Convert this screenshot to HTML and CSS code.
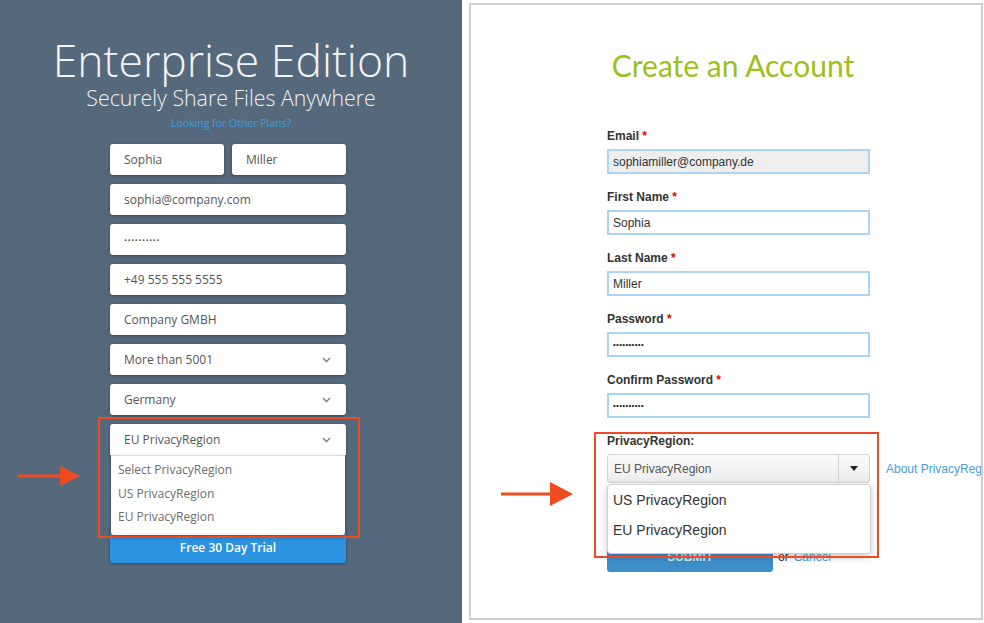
FILE: index.html
```html
<!DOCTYPE html>
<html lang="en">
<head>
    <meta charset="UTF-8">
    <meta name="viewport" content="width=device-width, initial-scale=1.0">
    <title>Privacy Region</title>
    <link rel="stylesheet" href="styles.css">
</head>
<body>
    <div class="plans">
        <h1 class="plans-title">Enterprise Edition</h1>
        <p class="plans-tagline">Securely Share Files Anywhere</p>
        <a class="plans-link" href="#">Looking for Other Plans?</a>

        <form class="trial-form">
            <div class="name-row">
                <div class="field">Sophia</div>
                <div class="field">Miller</div>
            </div>
            <div class="field">sophia@company.com</div>
            <div class="field field-dots">••••••••••</div>
            <div class="field">+49 555 555 5555</div>
            <div class="field">Company GMBH</div>
            <div class="field field-select">
                <span>More than 5001</span>
                <svg class="chevron" width="9" height="6" viewBox="0 0 9 6"><polyline points="1,1 4.5,4.5 8,1" fill="none" stroke="#7b7b7b" stroke-width="1.3"/></svg>
            </div>
            <div class="field field-select">
                <span>Germany</span>
                <svg class="chevron" width="9" height="6" viewBox="0 0 9 6"><polyline points="1,1 4.5,4.5 8,1" fill="none" stroke="#7b7b7b" stroke-width="1.3"/></svg>
            </div>
            <div class="field field-select field-open">
                <span>EU PrivacyRegion</span>
                <svg class="chevron" width="9" height="6" viewBox="0 0 9 6"><polyline points="1,1 4.5,4.5 8,1" fill="none" stroke="#7b7b7b" stroke-width="1.3"/></svg>
                <ul class="trial-options">
                    <li>Select PrivacyRegion</li>
                    <li>US PrivacyRegion</li>
                    <li>EU PrivacyRegion</li>
                </ul>
                <span class="callout callout-left"></span>
            </div>
            <button class="trial-button" type="button">Free 30 Day Trial</button>
        </form>

        <!-- Pfeil auf die Auswahl -->
        <svg class="pointer pointer-left" width="62" height="20" viewBox="0 0 62 20">
            <path d="M0 10H44" stroke="#f04a20" stroke-width="3"/>
            <path d="M42 0L62 10L42 20Z" fill="#f04a20"/>
        </svg>
    </div>

    <div class="account">
        <h2 class="account-title">Create an Account</h2>

        <form class="account-form">
            <div class="account-group">
                <label>Email <span class="req">*</span></label>
                <div class="account-input is-locked">sophiamiller@company.de</div>
            </div>
            <div class="account-group">
                <label>First Name <span class="req">*</span></label>
                <div class="account-input">Sophia</div>
            </div>
            <div class="account-group">
                <label>Last Name <span class="req">*</span></label>
                <div class="account-input">Miller</div>
            </div>
            <div class="account-group">
                <label>Password <span class="req">*</span></label>
                <div class="account-input account-dots">••••••••••</div>
            </div>
            <div class="account-group">
                <label>Confirm Password <span class="req">*</span></label>
                <div class="account-input account-dots">••••••••••</div>
            </div>
            <div class="account-group privacy-group">
                <label>PrivacyRegion:</label>
                <div class="region-row">
                    <div class="region-select">
                        <span class="region-value">EU PrivacyRegion</span>
                        <span class="region-caret">
                            <svg width="8" height="5" viewBox="0 0 8 5"><path d="M0 0H8L4 5Z" fill="#222"/></svg>
                        </span>
                    </div>
                    <a class="region-about" href="#">About PrivacyRegion</a>
                </div>
                <ul class="region-options">
                    <li>US PrivacyRegion</li>
                    <li>EU PrivacyRegion</li>
                </ul>
                <span class="callout callout-right"></span>
            </div>
            <div class="account-actions">
                <button class="submit-button" type="button">SUBMIT</button>
                <span class="or">or</span>
                <a class="cancel" href="#">Cancel</a>
            </div>
        </form>

        <svg class="pointer pointer-right" width="72" height="24" viewBox="0 0 72 24">
            <path d="M0 12H52" stroke="#f04a20" stroke-width="3"/>
            <path d="M49 0L72 12L49 24Z" fill="#f04a20"/>
        </svg>
    </div>
</body>
</html>
```

FILE: styles.css
```css
body {
    display: flex;
    height: 623px;
    margin: 0;
    background: #fff;
    overflow: hidden;
    font-family: "Open Sans", Arial, sans-serif;
}

/* linke Seite */
.plans {
    position: relative;
    width: 462px;
    flex-shrink: 0;
    display: flex;
    flex-direction: column;
    align-items: center;
    padding-top: 36px;
    box-sizing: border-box;
    background: #56687c;
    color: #f1f3f5;
}

.plans-title {
    margin: 0;
    font-size: 44.5px;
    font-weight: 300;
    line-height: 48px;
}

.plans-tagline {
    margin: 2px 0 0;
    font-size: 21.3px;
    font-weight: 300;
    line-height: 24px;
}

.plans-link {
    margin-top: 6px;
    font-size: 10.5px;
    line-height: 14px;
    color: #3d9de2;
    text-decoration: none;
}

.trial-form {
    display: flex;
    flex-direction: column;
    gap: 9px;
    width: 236px;
    margin-top: 14px;
    margin-right: 6px;
}

.name-row {
    display: flex;
    gap: 8px;
}

.name-row .field {
    flex: 1;
}

.field {
    position: relative;
    display: flex;
    align-items: center;
    justify-content: space-between;
    height: 31px;
    padding: 0 14px;
    box-sizing: border-box;
    background: #fff;
    border-radius: 3px;
    box-shadow: 0 1px 3px rgba(0, 0, 0, 0.35);
    font-size: 12px;
    color: #555;
}

.field-dots {
    font-size: 8px;
    letter-spacing: 0.6px;
}

.field-select .chevron {
    margin-right: 1px;
}

.field-open {
    border-radius: 3px 3px 0 0;
}

.trial-options {
    position: absolute;
    top: 31px;
    left: 1px;
    right: 1px;
    margin: 0;
    padding: 2px 0 6px;
    list-style: none;
    background: #fff;
    border-top: 1px solid #d8d8d8;
    border-radius: 0 0 3px 3px;
    box-shadow: 0 2px 4px rgba(0, 0, 0, 0.3);
    z-index: 2;
}

.trial-options li {
    padding-left: 7px;
    line-height: 23.5px;
    color: #6d6d6d;
}

.trial-button {
    height: 31px;
    margin-top: 68px;
    border: none;
    border-radius: 3px;
    background: #2a92e0;
    box-shadow: 0 1px 3px rgba(0, 0, 0, 0.35);
    font-family: "Open Sans", Arial, sans-serif;
    font-size: 12px;
    font-weight: 600;
    color: #fff;
}

.callout {
    position: absolute;
    border: 2px solid #ee4b25;
    box-sizing: border-box;
    pointer-events: none;
    z-index: 3;
}

.callout-left {
    top: -7px;
    left: -12px;
    width: 262px;
    height: 121px;
}

.pointer {
    position: absolute;
}

.pointer-left {
    left: 18px;
    top: 466px;
}

/* rechte Seite */
.account {
    position: relative;
    flex: 1;
    margin: 3px 1px 3px 7px;
    border: 2px solid #cfcfcf;
    background: #fff;
    overflow: hidden;
    font-family: "Liberation Sans", Arial, sans-serif;
}

.account-title {
    margin: 42px 0 44px;
    padding-left: 14px;
    font-family: Lato, "Open Sans", sans-serif;
    font-size: 30px;
    font-weight: 400;
    line-height: 36px;
    text-align: center;
    color: #9cbf1a;
}

.account-form {
    width: 263px;
    margin-left: 136px;
}

.account-group {
    position: relative;
    display: flex;
    flex-direction: column;
}

.account-group label {
    margin: 2px 0 5px;
    font-size: 12px;
    font-weight: bold;
    line-height: 15px;
    color: #333;
}

.req {
    color: #e30000;
}

.account-input {
    display: flex;
    align-items: center;
    height: 25px;
    margin-bottom: 14px;
    padding-left: 4px;
    box-sizing: border-box;
    border: 2px solid #acd4f3;
    font-size: 12px;
    color: #333;
}

.account-input.is-locked {
    background: #eeeeee;
}

.account-dots {
    font-size: 8px;
    letter-spacing: 0.3px;
    color: #222;
}

.region-row {
    display: flex;
    align-items: center;
    white-space: nowrap;
}

.region-select {
    display: flex;
    flex-shrink: 0;
    width: 263px;
    height: 29px;
    box-sizing: border-box;
    border: 1px solid #d3d3d3;
    border-radius: 3px;
    background: linear-gradient(#fbfbfb, #ececec);
}

.region-value {
    flex: 1;
    display: flex;
    align-items: center;
    padding-left: 6px;
    font-size: 12px;
    color: #555;
}

.region-caret {
    display: flex;
    align-items: center;
    justify-content: center;
    width: 30px;
    border-left: 1px solid #d3d3d3;
}

.region-about {
    margin-left: 16px;
    font-size: 12px;
    color: #4a9bd6;
    text-decoration: none;
}

.region-options {
    position: absolute;
    top: 52px;
    left: 0;
    width: 264px;
    margin: 0;
    padding: 0 0 8px;
    box-sizing: border-box;
    list-style: none;
    background: #fff;
    border: 1px solid #cfcfcf;
    border-radius: 4px;
    box-shadow: 0 3px 8px rgba(0, 0, 0, 0.22);
    z-index: 2;
}

.region-options li {
    padding-left: 5px;
    font-size: 14px;
    line-height: 30px;
    color: #333;
}

.callout-right {
    top: 0;
    left: -13px;
    width: 285px;
    height: 126px;
}

.account-actions {
    display: flex;
    align-items: center;
    margin-top: 58px;
}

.submit-button {
    width: 166px;
    height: 31px;
    border: none;
    border-radius: 3px;
    background: #3d8ec9;
    font-family: "Liberation Sans", Arial, sans-serif;
    font-size: 12px;
    font-weight: bold;
    color: #d6e6f3;
}

.or {
    margin-left: 5px;
    font-size: 12px;
    color: #333;
}

.cancel {
    margin-left: 5px;
    font-size: 12px;
    color: #4a9bd6;
    text-decoration: none;
}

.pointer-right {
    left: 30px;
    top: 477px;
}
```
